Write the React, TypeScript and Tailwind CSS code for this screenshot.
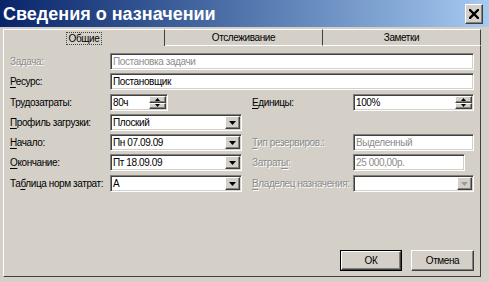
import React from "react";

const sunken =
  "border border-t-[#808080] border-l-[#808080] border-b-white border-r-white shadow-[inset_1px_1px_0_#404040,inset_-1px_-1px_0_#d4d0c8]";
const raised =
  "border border-t-white border-l-white border-b-[#404040] border-r-[#404040] shadow-[inset_-1px_-1px_0_#808080,inset_1px_1px_0_#d4d0c8]";

const disabledLabel = "text-[#8c8c8c] [text-shadow:1px_1px_0_#ffffff]";

function Label({ children, disabled, w }: { children: React.ReactNode; disabled?: boolean; w: string }) {
  return (
    <div className={`${w} shrink-0 whitespace-nowrap leading-none ${disabled ? disabledLabel : "text-black"}`}>
      {children}
    </div>
  );
}

function U({ children }: { children: React.ReactNode }) {
  return <span className="underline underline-offset-[2px]">{children}</span>;
}

function Arrow({ up, small, gray }: { up?: boolean; small?: boolean; gray?: boolean }) {
  const color = gray ? "#9a9a9a" : "#000";
  if (small) {
    return (
      <svg width="5" height="3" viewBox="0 0 5 3">
        {up ? <polygon points="2.5,0 5,3 0,3" fill={color} /> : <polygon points="0,0 5,0 2.5,3" fill={color} />}
      </svg>
    );
  }
  return (
    <svg width="7" height="4" viewBox="0 0 7 4">
      <polygon points="0,0 7,0 3.5,4" fill={color} />
    </svg>
  );
}

function Field({
  w,
  text,
  gray,
  select,
  spin,
  disabledArrow,
}: {
  w: string;
  text?: string;
  gray?: boolean;
  select?: boolean;
  spin?: boolean;
  disabledArrow?: boolean;
}) {
  return (
    <div className={`h-[17px] ${w} shrink-0 bg-white ${sunken} flex items-stretch p-[1px]`}>
      <div
        className={`flex-1 flex items-center pl-[1px] leading-none whitespace-nowrap overflow-hidden ${
          gray ? "text-[#8c8c8c]" : "text-black"
        }`}
      >
        {text}
      </div>
      {select && (
        <div className={`w-[15px] bg-[#d4d0c8] ${raised} flex items-center justify-center`}>
          <Arrow gray={disabledArrow} />
        </div>
      )}
      {spin && (
        <div className="w-[17px] flex flex-col">
          <div className={`flex-1 bg-[#d4d0c8] ${raised} flex items-center justify-center`}>
            <Arrow up small />
          </div>
          <div className={`flex-1 bg-[#d4d0c8] ${raised} flex items-center justify-center`}>
            <Arrow small />
          </div>
        </div>
      )}
    </div>
  );
}

export default function App() {
  return (
    <div
      className="w-[489px] h-[282px] bg-[#d4d0c8] overflow-hidden flex flex-col text-[10px] tracking-[-0.4px]"
      style={{ fontFamily: '"Liberation Sans", Arial, sans-serif' }}
    >
      {/* Title bar */}
      <div className="h-[27px] shrink-0 bg-gradient-to-r from-[#0a246a] to-[#a6caf0] flex items-center justify-between pl-[3px] pr-[6px]">
        <div className="text-white font-bold text-[18px] leading-none tracking-[0px]">Сведения о назначении</div>
        <div className={`w-[18px] h-[20px] bg-[#d4d0c8] ${raised} flex items-center justify-center mt-[1px]`}>
          <svg width="10" height="10" viewBox="0 0 10 10">
            <path d="M1 1 L9 9 M9 1 L1 9" stroke="#000" strokeWidth="2.4" strokeLinecap="square" />
          </svg>
        </div>
      </div>

      {/* Body */}
      <div className="flex-1 flex flex-col pt-[2px] pl-[3px] pr-[8px] pb-[5px]">
        {/* Tabs */}
        <div className="h-[17px] shrink-0 flex">
          <div className="w-[162px] border-t border-l border-t-white border-l-white border-r border-r-[#404040] flex items-center justify-center">
            <span className="border border-dotted border-[#444] px-[2px] leading-[11px]">Общие</span>
          </div>
          <div className="w-[158px] border-t border-t-white border-b border-b-white border-r border-r-[#404040] flex items-center justify-center">
            Отслеживание
          </div>
          <div className="flex-1 border-t border-t-white border-b border-b-white border-r border-r-[#404040] flex items-center justify-center">
            Заметки
          </div>
        </div>

        {/* Panel */}
        <div className="flex-1 flex flex-col border-l border-l-white border-r border-r-[#404040] border-b border-b-[#404040] pl-[6px] pr-[6px] pt-[7px] pb-[5px]">
          {/* Задача */}
          <div className="flex items-center">
            <Label w="w-[100px]" disabled>
              Задача:
            </Label>
            <Field w="w-[364px]" text="Постановка задачи" gray />
          </div>
          {/* Ресурс */}
          <div className="flex items-center mt-[3px]">
            <Label w="w-[100px]">
              <U>Р</U>есурс:
            </Label>
            <Field w="w-[364px]" text="Постановщик" />
          </div>
          {/* Трудозатраты / Единицы */}
          <div className="flex items-center mt-[4px]">
            <Label w="w-[100px]">Трудозатраты:</Label>
            <div className="w-[142px] shrink-0">
              <Field w="w-[58px]" text="80ч" spin />
            </div>
            <Label w="w-[101px]">
              <U>Е</U>диницы:
            </Label>
            <Field w="w-[121px]" text="100%" spin />
          </div>
          {/* Профиль */}
          <div className="flex items-center mt-[3px]">
            <Label w="w-[100px]">
              <U>П</U>рофиль загрузки:
            </Label>
            <Field w="w-[132px]" text="Плоский" select />
          </div>
          {/* Начало / Тип */}
          <div className="flex items-center mt-[3px]">
            <Label w="w-[100px]">
              <U>Н</U>ачало:
            </Label>
            <div className="w-[142px] shrink-0">
              <Field w="w-[132px]" text="Пн 07.09.09" select />
            </div>
            <Label w="w-[101px]" disabled>
              <U>Т</U>ип резервиров.:
            </Label>
            <Field w="w-[121px]" text="Выделенный" gray />
          </div>
          {/* Окончание / Затраты */}
          <div className="flex items-center mt-[3px]">
            <Label w="w-[100px]">
              <U>О</U>кончание:
            </Label>
            <div className="w-[142px] shrink-0">
              <Field w="w-[132px]" text="Пт 18.09.09" select />
            </div>
            <Label w="w-[101px]" disabled>
              Затрат<U>ы</U>:
            </Label>
            <Field w="w-[112px]" text="25 000,00р." gray />
          </div>
          {/* Таблица / Владелец */}
          <div className="flex items-center mt-[4px]">
            <Label w="w-[100px]">
              Та<U>б</U>лица норм затрат:
            </Label>
            <div className="w-[142px] shrink-0">
              <Field w="w-[132px]" text="А" select />
            </div>
            <Label w="w-[101px]" disabled>
              <U>В</U>ладелец назначения:
            </Label>
            <Field w="w-[121px]" select disabledArrow />
          </div>

          {/* Buttons */}
          <div className="mt-auto flex justify-end gap-[9px]">
            <div className="w-[62px] h-[21px] border border-black">
              <div className={`w-full h-full bg-[#d4d0c8] ${raised} flex items-center justify-center leading-none`}>
                ОК
              </div>
            </div>
            <div className={`w-[63px] h-[21px] bg-[#d4d0c8] ${raised} flex items-center justify-center leading-none`}>
              Отмена
            </div>
          </div>
        </div>
      </div>
    </div>
  );
}
